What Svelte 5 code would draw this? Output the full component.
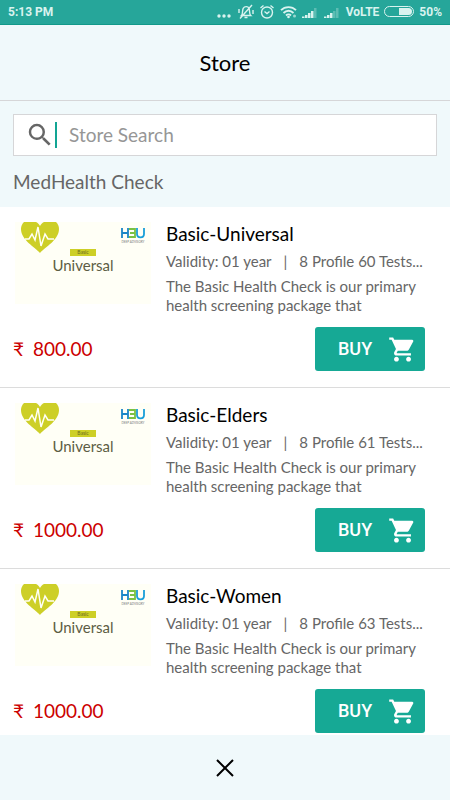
<script>
  let query = "";

  const plans = [
    { name: "Basic-Universal", tests: "8 Profile 60 Tests...", price: "800.00" },
    { name: "Basic-Elders", tests: "8 Profile 61 Tests...", price: "1000.00" },
    { name: "Basic-Women", tests: "8 Profile 63 Tests...", price: "1000.00" }
  ];

  $: shown = plans.filter(p =>
    p.name.toLowerCase().includes(query.toLowerCase())
  );
</script>

<style>
  :global(body) {
    background: #fff;
  }
  .store {
    display: flex;
    flex-direction: column;
    height: 100vh;
    font-family: Lato, "Liberation Sans", sans-serif;
    color: #666;
  }
  .status {
    flex: none;
    box-sizing: border-box;
    display: flex;
    align-items: center;
    height: 25px;
    padding: 0 8px;
    background: #26a69a;
    border-bottom: 1px solid #12998a;
    color: #d9f3ef;
    font: 700 12px/24px Roboto, sans-serif;
  }
  .status svg {
    display: block;
  }
  .time {
    flex: 1;
  }
  .icons {
    display: flex;
    align-items: center;
    gap: 5px;
  }
  header {
    flex: none;
    background: #f0f9fb;
    border-bottom: 1px solid #d6d6d8;
  }
  h1 {
    margin: 0;
    color: #000;
    font-size: 22px;
    line-height: 76px;
    height: 75px;
    font-weight: 400;
    text-align: center;
  }
  .top {
    flex: none;
    padding: 13px 13px 0;
    background: #f0f9fb;
  }
  .search {
    display: flex;
    align-items: center;
    height: 40px;
    padding-left: 11px;
    background: #fff;
    border: 1px solid #d6d6d8;
  }
  .cursor {
    width: 2px;
    height: 26px;
    background: #12a594;
  }
  .search input {
    flex: 1;
    min-width: 0;
    border: 0;
    outline: 0;
    padding: 0 12px;
    background: none;
    color: #333;
    font: 19px/26px Lato, sans-serif;
  }
  .search input::placeholder {
    color: #969696;
    opacity: 1;
  }
  h2 {
    margin: 0;
    padding: 2px 0 1px;
    font-size: 19px;
    line-height: 48px;
    font-weight: 400;
  }
  ul {
    flex: 1;
    min-height: 0;
    margin: 0;
    padding: 0;
    overflow-y: auto;
    scrollbar-width: none;
    list-style: none;
  }
  li {
    display: grid;
    grid-template-columns: 138px 1fr;
    column-gap: 15px;
    padding: 15px 25px 16px 13px;
    border-bottom: 1px solid #dcdcdc;
  }
  .thumb {
    display: block;
    width: 138px;
    height: 84px;
  }
  h3 {
    margin: 0;
    color: #000;
    font-size: 19px;
    line-height: 23px;
    font-weight: 400;
  }
  .meta {
    display: flex;
    gap: 12px;
    margin: 6px 0;
    font-size: 15px;
    line-height: 20px;
    white-space: nowrap;
  }
  .desc {
    margin: 0;
    font-size: 15px;
    line-height: 19px;
  }
  .buy-row {
    grid-column: 1 / -1;
    display: flex;
    align-items: center;
    justify-content: space-between;
    margin-top: 12px;
  }
  .price {
    display: flex;
    gap: 9px;
    color: #cc0000;
    font-size: 19px;
    line-height: 24px;
  }
  .buy {
    display: flex;
    align-items: center;
    justify-content: space-between;
    width: 110px;
    height: 44px;
    padding: 0 8px 0 23px;
    border: 0;
    border-radius: 3px;
    background: #16a995;
    color: #fff;
    font: 500 18px/24px Roboto, sans-serif;
    cursor: pointer;
  }
  footer {
    flex: none;
    display: flex;
    justify-content: center;
    background: #f0f9fb;
  }
  .close {
    padding: 20px;
    border: 0;
    background: none;
    cursor: pointer;
  }
  .close svg {
    display: block;
  }
</style>

<div class="store">
  <div class="status">
    <span class="time">5:13 PM</span>
    <div class="icons">
      <svg width="16" height="16" fill="#d9f3ef">
        <circle cx="2" cy="12" r="1.700" />
        <circle cx="7" cy="12" r="1.700" />
        <circle cx="12" cy="12" r="1.700" />
      </svg>
      <svg width="16" height="16" fill="none" stroke="#d9f3ef" stroke-width="1.4">
        <path d="M3.500 11.500C5 10 4.200 6 5.200 4.300C6.500 2 10 2 11 4.300C12 6.500 11 10 12.700 11.500ZM6.500 13.500h3M14 1L2 14.500M1 5v4M15 6v4" />
      </svg>
      <svg width="16" height="16" fill="none" stroke="#d9f3ef" stroke-width="1.4">
        <circle cx="8" cy="8.500" r="5.500" />
        <path d="M5.500 7.500L8 9.500L10.500 7.500M1.500 4L4.500 1.500M14.500 4L11.500 1.500" />
      </svg>
      <svg width="17" height="16" fill="none" stroke="#d9f3ef" stroke-width="1.800">
        <path d="M1 6.200C5 2 12 2 16 6.200M3.500 9C6.500 6 10.500 6 13.500 9M6 11.500C7.500 10 9.500 10 11 11.500" />
        <circle cx="8.500" cy="13" r="1.300" fill="#d9f3ef" stroke="none" />
        <circle cx="14.500" cy="12" r="1.500" fill="#9bd8d0" stroke="none" />
      </svg>
      <svg width="17" height="16" fill="#d9f3ef">
        <path d="M0 12.500h2.500V14H0zM3 11h2.500v3H3zM6 9h2.500v5H6zM9 7h2.500v7H9z" />
        <path d="M12 4h2.500v10H12z" opacity=".3" />
      </svg>
      <svg width="17" height="16" fill="#d9f3ef">
        <path d="M0 12.500h2.500V14H0zM3 11h2.500v3H3zM6 9h2.500v5H6z" />
        <path d="M9 7h2.500v7H9zM12 4h2.500v10H12z" opacity=".3" />
      </svg>
      <span>VoLTE</span>
      <svg width="30" height="12">
        <rect x="0.500" y="0.500" width="29" height="10" rx="5" fill="none" stroke="#d9f3ef" />
        <path d="M15 2h9.500a3.500 3.500 0 0 1 0 7H15z" fill="#d9f3ef" />
      </svg>
      <span>50%</span>
    </div>
  </div>

  <header>
    <h1>Store</h1>
  </header>

  <div class="top">
    <label class="search">
      <svg width="30" height="30" viewBox="0 0 24 24" fill="#666">
        <path d="M15.500 14h-.79l-.28-.27A6.471 6.471 0 0 0 16 9.500 6.500 6.500 0 1 0 9.500 16c1.610 0 3.090-.59 4.230-1.570l.27.28v.79l5 4.990L20.490 19l-4.990-5zm-6 0C7.010 14 5 11.990 5 9.500S7.010 5 9.500 5 14 7.010 14 9.500 11.990 14 9.500 14z" />
      </svg>
      <span class="cursor"></span>
      <input type="text" bind:value={query} placeholder="Store Search" aria-label="Store Search" />
    </label>
    <h2>MedHealth Check</h2>
  </div>

  <ul>
    {#each shown as plan}
      <li>
        <svg class="thumb" viewBox="0 0 138 84">
          <rect x="2" y="0" width="136" height="82" fill="#fffff6" />
          <path d="M27 31C22 25 8 18 8 7C8 4 9 2 11 0H23C25 1 26 2 27 4C28 2 29 1 31 0H43C45 2 46 4 46 7C46 18 32 25 27 31Z" fill="#cdcf27" />
          <path d="M12 17H16L19 12L22 18L25 5L28 24L32 12L35 17H41" fill="none" stroke="#fffff6" stroke-width="1.500" />
          <rect x="57" y="27" width="26" height="7" fill="#cdcf27" />
          <text x="70" y="32" text-anchor="middle" font-size="5" fill="#6c6b20">Basic</text>
          <text x="70" y="49" text-anchor="middle" font-size="15" fill="#5d5d44">Universal</text>
          <g fill="none" stroke-width="1.800">
            <path d="M109 6V16M109 11H115M115 6V16" stroke="#1a86c7" />
            <path d="M116 7H122V15H116M117 11H122" stroke="#7ac143" />
            <path d="M124 6V12C124 16.500 131 16.500 131 12V6" stroke="#1a9fd9" />
          </g>
          <text x="120" y="21" text-anchor="middle" font-size="3" fill="#777">DEEP ADVISORY</text>
        </svg>
        <div>
          <h3>{plan.name}</h3>
          <p class="meta">
            <span>Validity: 01 year</span>
            <span>|</span>
            <span>{plan.tests}</span>
          </p>
          <p class="desc">The Basic Health Check is our primary health screening package that</p>
        </div>
        <div class="buy-row">
          <span class="price"><span>₹</span><span>{plan.price}</span></span>
          <button class="buy">
            BUY
            <svg width="29" height="29" viewBox="0 0 24 24" fill="#fff">
              <path d="M7 18c-1.100 0-1.990.9-1.990 2S5.900 22 7 22s2-.9 2-2-.9-2-2-2zM1 2v2h2l3.600 7.590-1.350 2.450c-.16.28-.25.61-.25.960 0 1.100.9 2 2 2h12v-2H7.420c-.14 0-.25-.11-.25-.25l.03-.12.9-1.630h7.450c.75 0 1.410-.41 1.750-1.030l3.580-6.490A1 1 0 0 0 20 4H5.210l-.94-2H1zm16 16c-1.100 0-1.990.9-1.990 2s.89 2 1.990 2 2-.9 2-2-.9-2-2-2z" />
            </svg>
          </button>
        </div>
      </li>
    {/each}
  </ul>

  <footer>
    <button class="close" aria-label="Close">
      <svg width="25" height="25" fill="none" stroke="#000" stroke-width="2">
        <path d="M4 5L20 21M20 5L4 21" />
      </svg>
    </button>
  </footer>
</div>
